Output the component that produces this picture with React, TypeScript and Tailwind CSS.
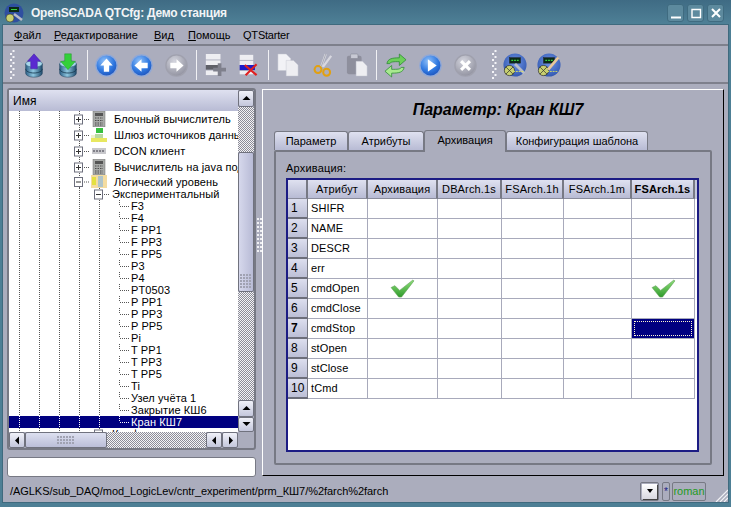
import React from "react";

const Defs = () => (
  <svg width="0" height="0" className="block h-0 w-0">
    <defs>
      <radialGradient id="blueBall" cx="40%" cy="30%" r="75%">
        <stop offset="0%" stopColor="#8fc0f8" />
        <stop offset="60%" stopColor="#2f78e0" />
        <stop offset="100%" stopColor="#1c50b8" />
      </radialGradient>
      <radialGradient id="greyBall" cx="40%" cy="30%" r="75%">
        <stop offset="0%" stopColor="#d4d5de" />
        <stop offset="100%" stopColor="#8f909e" />
      </radialGradient>
      <linearGradient id="dbBody" x1="0" x2="1" y1="0" y2="0">
        <stop offset="0%" stopColor="#2c5f86" />
        <stop offset="45%" stopColor="#8fc7e0" />
        <stop offset="100%" stopColor="#1e4a6c" />
      </linearGradient>
      <linearGradient id="checkG" x1="0" x2="0" y1="0" y2="1">
        <stop offset="0%" stopColor="#8fe07a" />
        <stop offset="100%" stopColor="#2f9a2c" />
      </linearGradient>
      <radialGradient id="station" cx="50%" cy="40%" r="70%">
        <stop offset="0%" stopColor="#6f96e8" />
        <stop offset="100%" stopColor="#2a4fa8" />
      </radialGradient>
    </defs>
  </svg>
);

const Db = ({ dir }: { dir: "up" | "down" }) => (
  <svg width="20" height="25" viewBox="1 0 24 30">
    <path d="M3 13v11c0 3 4.500 5 10 5s10-2 10-5V13z" fill="url(#dbBody)" stroke="#1a3a55" strokeWidth="0.6" />
    <path d="M3 19c0 3 4.500 5 10 5s10-2 10-5" fill="none" stroke="#17384f" strokeWidth="1" />
    <ellipse cx="13" cy="13" rx="10" ry="4" fill="#a8d6ea" stroke="#2a5a78" strokeWidth="0.6" />
    {dir === "up" ? (
      <path d="M13 1l8 9h-4v9H9v-9H5z" fill="#5a2ad0" stroke="#3b1a96" strokeWidth="0.5" />
    ) : (
      <path d="M9 1h8v9h5l-9 10-9-10h5z" fill="#33d03a" stroke="#1e8f25" strokeWidth="0.5" />
    )}
  </svg>
);

const Ball = ({ grey, children }: { grey?: boolean; children: React.ReactNode }) => (
  <svg width="23" height="23" viewBox="0 0 26 26">
    <circle cx="13" cy="13" r="12" fill={grey ? "url(#greyBall)" : "url(#blueBall)"} stroke={grey ? "#a0a1ae" : "#8fa8d8"} strokeWidth="1.500" />
    {children}
  </svg>
);

const TableAdd = () => (
  <svg width="22" height="24" viewBox="0 0 24 26">
    <rect x="2" y="1" width="16" height="6" fill="#eeeef2" />
    <rect x="2" y="8" width="16" height="5" fill="#eeeef2" />
    <rect x="2" y="13" width="16" height="5" fill="#5f6068" />
    <rect x="2" y="19" width="16" height="5" fill="#eeeef2" />
    <path d="M15 11h4v5h5v4h-5v5h-4v-5h-5v-4h5z" fill="#7f808c" />
  </svg>
);

const TableDel = () => (
  <svg width="22" height="24" viewBox="0 0 26 26">
    <rect x="2" y="1" width="16" height="6" fill="#eeeef2" />
    <rect x="2" y="8" width="16" height="5" fill="#eeeef2" />
    <rect x="2" y="13" width="18" height="6" fill="#1c1cc8" />
    <rect x="2" y="20" width="16" height="4" fill="#eeeef2" />
    <path d="M8 13l14 12M22 12L9 25" stroke="#e02020" strokeWidth="2.500" fill="none" />
  </svg>
);

const Doc = ({ x, y, w, h, f }: { x: number; y: number; w: number; h: number; f: string }) => (
  <path d={`M${x} ${y}h${w - 5}l5 5v${h - 5}h-${w}z`} fill={f} stroke="#c4c5d0" strokeWidth="0.5" />
);

const Copy = () => (
  <svg width="22" height="24" viewBox="0 0 24 26">
    <Doc x={1} y={1} w={14} h={18} f="#f2f2f6" />
    <Doc x={10} y={8} w={13} h={17} f="#eeeef2" />
  </svg>
);

const Scissors = () => (
  <svg width="20" height="24" viewBox="0 0 22 26">
    <path d="M9 15L14 1M11 15L20 3" stroke="#d8d8e0" strokeWidth="2.500" fill="none" />
    <path d="M9 15L14 1" stroke="#8f909c" strokeWidth="0.7" fill="none" />
    <circle cx="5.500" cy="18" r="3.800" fill="none" stroke="#e2a010" strokeWidth="2.200" />
    <circle cx="15" cy="21" r="3.800" fill="none" stroke="#e2a010" strokeWidth="2.200" />
  </svg>
);

const Paste = () => (
  <svg width="22" height="24" viewBox="0 0 24 26">
    <rect x="1" y="3" width="16" height="20" rx="2" fill="#8e8f9d" />
    <rect x="5" y="1" width="8" height="5" rx="1" fill="#c8c9d4" stroke="#7a7b88" strokeWidth="0.5" />
    <Doc x={11} y={9} w={12} h={16} f="#eeeef2" />
  </svg>
);

const Refresh = () => (
  <svg width="23" height="25" viewBox="0 0 24 26">
    <path d="M3 11C4 6 8 5 16 5V1l7 6-7 6V9C10 9 7 9 6 11z" fill="#6ccf5a" stroke="#2c8a34" strokeWidth="0.8" />
    <path d="M21 15c-1 5-5 6-13 6v4l-7-6 7-6v4c6 0 9 0 10-2z" fill="#a8e88f" stroke="#2c8a34" strokeWidth="0.8" />
  </svg>
);

const Station = ({ pencil }: { pencil?: boolean }) => (
  <svg width="24" height="24" viewBox="0 0 26 26">
    <circle cx="13" cy="13" r="12.500" fill="url(#station)" />
    <rect x="7" y="5" width="12" height="6" fill="#0c2a18" stroke="#222" strokeWidth="0.5" />
    <path d="M9 8h8" stroke="#38d040" strokeWidth="1.500" strokeDasharray="2 1" />
    <circle cx="7" cy="19" r="5.500" fill="#c8d070" stroke="#222" strokeWidth="0.7" />
    <path d="M3 23l8-8M3 15l8 8" stroke="#333" strokeWidth="0.8" />
    {pencil ? (
      <path d="M12 18l11-13" stroke="#e8c89a" strokeWidth="3" />
    ) : (
      <path d="M13 12l10 10" stroke="#b8bcc8" strokeWidth="3" />
    )}
    <path d="M11 20h12" stroke="#d8e060" strokeWidth="1" strokeDasharray="2 1" />
  </svg>
);

const Arrow = ({ d }: { d: string }) => <path d={d} fill="#fff" />;

const Grip = () => (
  <svg width="5" height="30" viewBox="0 0 5 30">
    {Array.from({ length: 10 }).map((_, i) => (
      <rect key={i} x={i % 2 ? 0 : 2.500} y={i * 3} width="2" height="2" fill="#f4f4f8" />
    ))}
  </svg>
);

const Sep = () => (
  <div className="flex w-1 shrink-0 justify-center">
    <div className="h-[30px] w-px bg-[#f0f0f4]" />
  </div>
);

const Tool = ({ w, children }: { w: string; children: React.ReactNode }) => (
  <div className={`${w} flex shrink-0 items-center justify-center`}>{children}</div>
);

const Toolbar = () => (
  <div className="flex h-[38px] shrink-0 items-center border-b-2 border-[#7e808c] pt-[2px]">
    <div className="flex w-[14px] shrink-0 justify-end pr-[2px]"><Grip /></div>
    <Tool w="w-[34px]"><Db dir="up" /></Tool>
    <Tool w="w-[34px]"><Db dir="down" /></Tool>
    <Sep />
    <Tool w="w-[35px]"><Ball><Arrow d="M13 5l7 8h-4v7h-6v-7H6z" /></Ball></Tool>
    <Tool w="w-[35px]"><Ball><Arrow d="M5 13l8-7v4h7v6h-7v4z" /></Ball></Tool>
    <Tool w="w-[35px]"><Ball grey><Arrow d="M21 13l-8-7v4H6v6h7v4z" /></Ball></Tool>
    <Sep />
    <Tool w="w-[34px]"><TableAdd /></Tool>
    <Tool w="w-[34px]"><TableDel /></Tool>
    <Sep />
    <Tool w="w-[36px]"><Copy /></Tool>
    <Tool w="w-[34px]"><Scissors /></Tool>
    <Tool w="w-[34px]"><Paste /></Tool>
    <Sep />
    <Tool w="w-[35px]"><Refresh /></Tool>
    <Tool w="w-[35px]"><Ball><Arrow d="M10 6l10 7-10 7z" /></Ball></Tool>
    <Tool w="w-[35px]"><Ball grey><path d="M8 8l10 10M18 8L8 18" stroke="#fff" strokeWidth="3.500" /></Ball></Tool>
    <div className="flex w-[15px] shrink-0 justify-center pl-[7px]"><Grip /></div>
    <Tool w="w-[34px]"><Station /></Tool>
    <Tool w="w-[34px]"><Station pencil /></Tool>
  </div>
);

const WinBtn = ({ children }: { children: React.ReactNode }) => (
  <div className="flex h-[18px] w-[17px] items-center justify-center rounded-[3px] border border-[#3f6b80] bg-[#5d8a9e]">
    <svg width="12" height="12" viewBox="0 0 12 12" fill="none" stroke="#fff" strokeWidth="2">{children}</svg>
  </div>
);

const TitleBar = () => (
  <div className="flex h-[25px] shrink-0 items-center bg-gradient-to-b from-[#3f6b84] to-[#4f8197] pl-1 pr-[7px]">
    <svg width="20" height="20" viewBox="0 0 20 20">
      <circle cx="10" cy="10" r="9.500" fill="#2f4fa0" />
      <rect x="5" y="4" width="10" height="5" fill="#0c2a18" />
      <path d="M7 6.500h6" stroke="#38d040" strokeWidth="1" />
      <circle cx="6" cy="15" r="4" fill="#c8d070" stroke="#222" strokeWidth="0.5" />
      <path d="M10 11l8 6" stroke="#b8bcc8" strokeWidth="2.500" />
    </svg>
    <span className="ml-[7px] flex-1 text-[12px] font-bold tracking-[-0.25px] text-[#f2f4f6]">OpenSCADA QTCfg: Демо станция</span>
    <div className="flex gap-[3px]">
      <WinBtn><path d="M1 10.500h10" /></WinBtn>
      <WinBtn><path d="M2 2.500h8.500v8H2z" strokeWidth="1.400" /></WinBtn>
      <WinBtn><path d="M2 2l8 8M10 2L2 10" /></WinBtn>
    </div>
  </div>
);

const Menu = () => (
  <div className="flex h-[21px] shrink-0 items-center border-b-2 border-[#7e808c] pl-[11px] pt-[2px] text-[11px] text-black">
    <span className="w-[40px]"><u>Ф</u>айл</span>
    <span className="w-[100px]"><u>Р</u>едактирование</span>
    <span className="w-[34px]"><u>В</u>ид</span>
    <span className="w-[55px]"><u>П</u>омощь</span>
    <span className="tracking-[-0.2px]">QTStarter</span>
  </div>
);

const Check = "bg-[conic-gradient(#8c8c98_25%,#f4f4f6_0_50%,#8c8c98_0_75%,#f4f4f6_0)] bg-[length:2px_2px]";

const ScrollBtn = ({ d, cls }: { d: string; cls: string }) => (
  <div className={`${cls} flex shrink-0 items-center justify-center rounded-[2px] border border-[#70727e] bg-gradient-to-b from-[#f0f1f8] to-[#c4c7dc]`}>
    <svg width="9" height="9" viewBox="0 0 9 9"><path d={d} fill="#000" /></svg>
  </div>
);

const Dots = ({ cols, rows }: { cols: number; rows: number }) => (
  <svg width={cols * 3} height={rows * 3} viewBox={`0 0 ${cols * 3} ${rows * 3}`}>
    {Array.from({ length: cols * rows }).map((_, i) => (
      <rect key={i} x={(i % cols) * 3} y={Math.floor(i / cols) * 3} width="2" height="2" fill="#a0a2b2" />
    ))}
  </svg>
);

type Cell = "l" | "p" | "m" | "e" | "n";

const TreeCell = ({ k, h, sel }: { k: Cell; h: number; sel?: boolean }) => {
  const c = sel ? "#fff" : "#555";
  return (
    <svg width="20" height={h} viewBox={`0 0 20 ${h}`} className="block shrink-0">
      {k !== "n" && <path d={`M10.500 0V${k === "e" ? h / 2 : h}`} stroke={c} strokeDasharray="1 1" />}
      {(k === "p" || k === "m") && (
        <g>
          <path d={`M15 ${h / 2 + 0.5}h5`} stroke={c} strokeDasharray="1 1" />
          <rect x="5.500" y={h / 2 - 4} width="8" height="9" fill="#fff" stroke="#6c6e7c" />
          <path d={`M7 ${h / 2 + 0.5}h5`} stroke="#333" />
          {k === "p" && <path d={`M9.500 ${h / 2 - 2}v5`} stroke="#333" />}
        </g>
      )}
      {k === "e" && <path d={`M11 ${h / 2 + 0.5}h9`} stroke={c} strokeDasharray="1 1" />}
    </svg>
  );
};

const Calc = () => (
  <svg width="14" height="16" viewBox="0 0 14 16">
    <rect x="1" y="0" width="12" height="16" fill="#a8aaa8" stroke="#707270" strokeWidth="0.5" />
    <rect x="3" y="2" width="8" height="3" fill="#555" />
    <path d="M3 7h8M3 9.500h8M3 12h8M3 14h8" stroke="#4c4c4c" strokeDasharray="1.500 1" />
  </svg>
);
const Gate = () => (
  <svg width="16" height="16" viewBox="0 0 16 16">
    <rect x="0" y="11" width="16" height="4" fill="#e8e860" />
    <rect x="5" y="1" width="7" height="5" fill="#38c040" />
    <rect x="4" y="7" width="8" height="4" fill="#b8d8a0" />
    <rect x="0" y="8" width="4" height="3" fill="#f0f0d0" />
  </svg>
);
const Dcon = () => (
  <svg width="16" height="12" viewBox="0 0 16 12">
    <rect x="1" y="3" width="14" height="6" fill="#c8c8cc" />
    <path d="M2 6h12" stroke="#808088" strokeWidth="2" strokeDasharray="2 1" />
  </svg>
);
const Logic = () => (
  <svg width="16" height="13" viewBox="0 0 16 13">
    <rect x="0" y="0" width="16" height="13" fill="#f4dca0" />
    <rect x="1" y="2" width="4" height="8" fill="#e4e040" />
    <rect x="7" y="1" width="5" height="11" fill="#b0c4c8" />
  </svg>
);

const Row = ({ cells, h = 12, icon, text, textCls = "pl-[2px]", sel }: { cells: Cell[]; h?: number; icon?: React.ReactNode; text: string; textCls?: string; sel?: boolean }) => (
  <div className={`flex shrink-0 items-center ${sel ? "bg-[#000080] text-white" : "text-black"}`} style={{ height: h }}>
    {cells.map((k, i) => <TreeCell key={i} k={k} h={h} sel={sel} />)}
    {icon && <div className="flex w-[25px] shrink-0 justify-center pr-[5px]">{icon}</div>}
    <span className={`whitespace-nowrap ${textCls}`}>{text}</span>
  </div>
);

const leaves = ["F3", "F4", "F PP1", "F PP3", "F PP5", "P3", "P4", "PT0503", "P PP1", "P PP3", "P PP5", "Pi", "T PP1", "T PP3", "T PP5", "Ti", "Узел учёта 1", "Закрытие КШ6"];

const Tree = () => (
  <div className="flex h-[321px] flex-col overflow-hidden bg-white text-[11px] leading-[12px] tracking-[0.1px]">
    <Row cells={["l", "l", "l", "p"]} h={16} icon={<Calc />} text="Блочный вычислитель" textCls="" />
    <Row cells={["l", "l", "l", "p"]} h={16} icon={<Gate />} text="Шлюз источников данных" textCls="" />
    <Row cells={["l", "l", "l", "p"]} h={16} icon={<Dcon />} text="DCON клиент" textCls="" />
    <Row cells={["l", "l", "l", "p"]} h={16} icon={<Calc />} text="Вычислитель на java подобном" textCls="" />
    <Row cells={["l", "l", "l", "m"]} h={13} icon={<Logic />} text="Логический уровень" textCls="" />
    <Row cells={["l", "l", "l", "l", "m"]} text="Экспериментальный" textCls="pl-[3px]" />
    {leaves.map((t) => <Row key={t} cells={["l", "l", "l", "l", "l", "e"]} text={t} />)}
    <Row cells={["l", "l", "l", "l", "l", "e"]} text="Кран КШ7" sel />
    <Row cells={["l", "l", "l", "l", "p"]} text="Конфигурация" textCls="pl-[3px]" />
  </div>
);

const TreePanel = () => (
  <div className="flex h-[362px] w-[249px] flex-col rounded-[3px] border-2 border-[#777984]">
    <div className="flex h-[342px]">
      <div className="flex w-[229px] flex-col">
        <div className="flex h-[21px] items-center bg-gradient-to-b from-[#dfe1f0] to-[#b8bbd4] pl-1 text-[12px] text-black">Имя</div>
        <Tree />
      </div>
      <div className="flex w-[16px] flex-col">
        <ScrollBtn cls="h-[17px]" d="M4.500 2l4 4H.5z" />
        <div className={`h-[45px] ${Check}`} />
        <div className="flex h-[140px] items-end justify-center rounded-[2px] border border-[#70727e] bg-gradient-to-r from-[#d6d8ec] to-[#b8bbd6] pb-[2px]"><Dots cols={4} rows={5} /></div>
        <div className={`flex-1 ${Check}`} />
        <ScrollBtn cls="h-[17px]" d="M4.500 2l4 4H.5z" />
        <ScrollBtn cls="h-[15px]" d="M.5 2h8l-4 4z" />
      </div>
    </div>
    <div className="flex h-4 text-black">
      <ScrollBtn cls="w-4" d="M2 4.500l4-4v8z" />
      <div className="flex w-[82px] items-center justify-center rounded-[2px] border border-[#70727e] bg-gradient-to-b from-[#dde0f0] to-[#bbbed8]"><Dots cols={6} rows={3} /></div>
      <div className={`w-[99px] ${Check}`} />
      <ScrollBtn cls="w-4" d="M2 4.500l4-4v8z" />
      <ScrollBtn cls="w-4" d="M3 .5l4 4-4 4z" />
    </div>
  </div>
);

const Tab = ({ t, w, active }: { t: string; w: string; active?: boolean }) => (
  <div
    className={`${w} flex items-center justify-center rounded-t-[3px] border border-[#777984] text-[11px] text-black ${
      active ? "z-10 -mb-[2px] h-[22px] border-b-0 bg-[#abadbd] pb-[3px]" : "mt-[1px] h-[19px] border-b-0 bg-gradient-to-b from-[#dfe1f0] to-[#b8bbd4]"
    }`}
  >
    {t}
  </div>
);

const cols = ["Атрибут", "Архивация", "DBArch.1s", "FSArch.1h", "FSArch.1m", "FSArch.1s"];
const widths = ["w-[60px]", "w-[70px]", "w-[64px]", "w-[62px]", "w-[68px]", "w-[63px]"];
const attrs = ["SHIFR", "NAME", "DESCR", "err", "cmdOpen", "cmdClose", "cmdStop", "stOpen", "stClose", "tCmd"];

const CheckMark = () => (
  <svg width="25" height="19" viewBox="0 0 26 20" className="mx-auto block">
    <path d="M1 9l4-2 5 5L24 1l1 1-13 17h-3z" fill="url(#checkG)" stroke="#5a9a52" strokeWidth="0.6" />
  </svg>
);

const hdr = "h-[19px] border-r-2 border-b border-r-[#777984] border-b-[#8a8c9c] bg-gradient-to-b from-[#dfe1f0] to-[#b8bbd4] p-0 text-center text-[11px] font-normal tracking-[0.15px] text-black";

const DataTable = () => (
  <div className="h-[274px] w-[413px] overflow-hidden border-2 border-[#1c1c84] bg-white">
    <table className="w-[409px] table-fixed border-separate border-spacing-0 text-[11px] text-black">
      <thead>
        <tr>
          <th className={`w-[20px] ${hdr}`} />
          {cols.map((c, i) => (
            <th key={c} className={`${widths[i]} ${hdr} ${c === "FSArch.1s" ? "!font-bold" : ""}`}>{c}</th>
          ))}
          <th className="h-[19px] w-[2px] bg-[#c4c7dc] p-0" />
        </tr>
      </thead>
      <tbody>
        {attrs.map((a, r) => (
          <tr key={a}>
            <td className={`h-5 border-r border-b-2 border-r-[#777984] border-b-[#6c6e7a] bg-gradient-to-b from-[#dcdeee] to-[#bcbfd6] p-0 pl-[3px] text-[12px] ${r === 6 ? "font-bold" : ""}`}>{r + 1}</td>
            <td className="h-5 border-r border-b border-[#a8aabb] p-0 pb-px pl-[3px] tracking-[0.1px]">{a}</td>
            {[0, 1, 2, 3, 4].map((c) => (
              <td key={c} className="h-5 border-r border-b border-[#a8aabb] p-0">
                {r === 4 && (c === 0 || c === 4) && <CheckMark />}
                {r === 6 && c === 4 && (
                  <div className="h-[19px] border-2 border-[#000080] bg-[#000080]">
                    <div className="h-full border border-dotted border-[#fff8d0]" />
                  </div>
                )}
              </td>
            ))}
            <td className="p-0" />
          </tr>
        ))}
      </tbody>
    </table>
  </div>
);

const RightPanel = () => (
  <div className="mt-[5px] flex h-[387px] w-[462px] flex-col border-t border-r border-b border-l border-t-white border-r-black border-b-black border-l-white pl-[11px]">
    <div className="flex h-[40px] shrink-0 items-center justify-center pr-[1px] text-[16px] font-bold italic text-black">Параметр: Кран КШ7</div>
    <div className="flex h-[20px] shrink-0">
      <Tab t="Параметр" w="w-[74px]" />
      <Tab t="Атрибуты" w="w-[76px]" />
      <Tab t="Архивация" w="w-[82px]" active />
      <Tab t="Конфигурация шаблона" w="w-[142px]" />
    </div>
    <div className="flex h-[315px] w-[438px] flex-col rounded-[2px] border-2 border-[#777984] pl-[10px] pt-[9px]">
      <div className="h-[17px] text-[11px] leading-[14px] tracking-[0.2px] text-black">Архивация:</div>
      <DataTable />
    </div>
  </div>
);

const StatusBar = () => (
  <div className="flex h-[25px] shrink-0 items-center pl-[7px] pt-[3px] text-[11px] text-black">
    <span className="flex-1 tracking-[-0.05px]">/AGLKS/sub_DAQ/mod_LogicLev/cntr_experiment/prm_КШ7/%2farch%2farch</span>
    <div className="flex h-[19px] w-[19px] items-center justify-center rounded-[2px] border border-[#777984]">
      <div className="flex h-[15px] w-[15px] items-center justify-center bg-gradient-to-b from-white to-[#d8d8e0] shadow-[1px_1px_0_#444]">
        <svg width="8" height="6" viewBox="0 0 8 6"><path d="M1 1h6L4 5z" fill="#000" /></svg>
      </div>
    </div>
    <div className="ml-[3px] flex h-[19px] w-[8px] items-center justify-center rounded-[2px] border border-[#777984] text-[10px] text-[#1c1c84]">*</div>
    <div className="ml-[2px] flex h-[19px] w-[34px] items-center justify-center rounded-[2px] border border-[#777984] text-[#1f9a1f]">roman</div>
    <svg width="22" height="22" viewBox="0 0 22 22" className="self-end">
      <path d="M22 10L10 22M22 14L14 22M22 18L18 22" stroke="#f2f2f6" strokeWidth="1.200" />
    </svg>
  </div>
);

export default function App() {
  return (
    <div className="flex h-[507px] w-[731px] flex-col overflow-hidden bg-[#4d7f95] font-['Liberation_Sans',sans-serif]">
      <Defs />
      <TitleBar />
      <div className="mx-[3px] mb-[5px] flex min-h-0 flex-1 flex-col bg-[#abadbd] shadow-[0_0_0_1px_#3f6a7e]">
        <Menu />
        <Toolbar />
        <div className="flex h-[393px] shrink-0 pl-1">
          <div className="flex w-[249px] shrink-0 flex-col pt-1">
            <TreePanel />
            <div className="mt-[7px] h-5 rounded-[3px] border border-[#777984] bg-white" />
          </div>
          <div className="flex w-[6px] shrink-0 justify-center pt-[134px]">
            <svg width="5" height="34" viewBox="0 0 5 34">
              {Array.from({ length: 18 }).map((_, i) => (
                <rect key={i} x={i % 2 ? 0 : 3} y={Math.floor(i / 2) * 4} width="2" height="2" fill="#f0f0f4" />
              ))}
            </svg>
          </div>
          <RightPanel />
        </div>
        <StatusBar />
      </div>
    </div>
  );
}
